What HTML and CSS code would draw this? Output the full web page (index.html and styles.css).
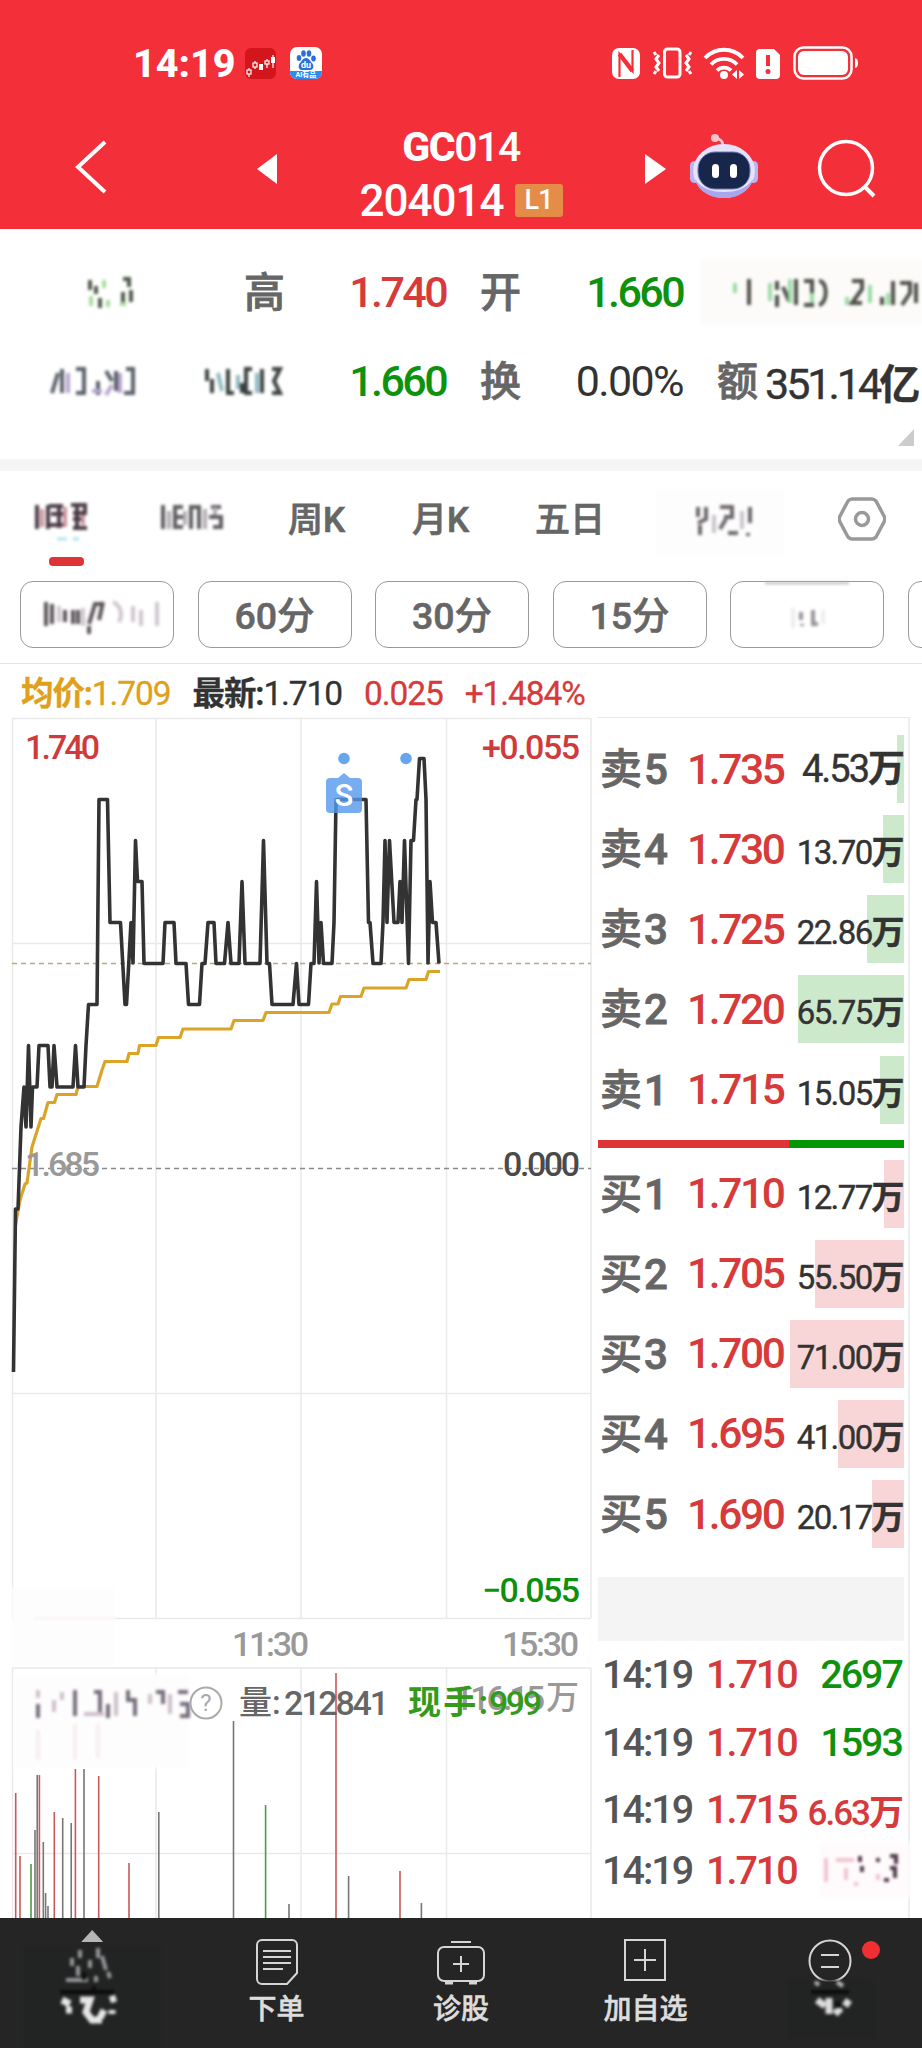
FILE: index.html
```html
<!DOCTYPE html>
<html lang="zh-CN">
<head>
  <meta charset="UTF-8" />
  <title>GC014 204014</title>
  <link rel="stylesheet" href="styles.css">
</head>
<body>
  <!-- Header -->
  <header>
    <div class="status-bar">
      <span class="clock">14:19</span>
      <svg class="app-icon" width="31" height="31" viewBox="0 0 31 31">
        <rect width="31" height="31" rx="6" fill="#d3161c"/>
        <g stroke="#fff" stroke-width="1.2" fill="none"><path d="M4 20v9M10 13v8M22 11v9M28 7v13"/><rect x="2" y="22" width="4" height="4" fill="#d3161c"/><rect x="8" y="15" width="4" height="4" fill="#d3161c"/><rect x="20" y="13" width="4" height="3" fill="#d3161c"/></g>
        <path d="M14 16h4v6h-4zM26 9h4v6h-4z" fill="#fff"/>
      </svg>
      <svg class="app-icon" width="32" height="32" viewBox="0 0 32 32">
        <rect width="32" height="32" rx="7" fill="#fff"/>
        <path d="M0 24h32v1a7 7 0 0 1-7 7H7a7 7 0 0 1-7-7z" fill="#2c8df0"/>
        <g fill="#2a6fd8"><ellipse cx="9" cy="11" rx="2.3" ry="3"/><ellipse cx="13.500" cy="6.500" rx="2.300" ry="3.200"/><ellipse cx="19" cy="6.500" rx="2.300" ry="3.200"/><ellipse cx="23.500" cy="11.500" rx="2.300" ry="3"/><path d="M16 11c3 0 4 3 6 5s2 7-2 7h-8c-4 0-4-5-2-7s3-5 6-5z"/></g>
        <text x="16" y="21" class="du">du</text>
        <text x="16" y="30" class="ai">AI有品</text>
      </svg>
      <svg class="sys-icons" width="250" height="36" viewBox="612 44 250 36">
        <rect x="612" y="47" width="28" height="31" rx="7" fill="#fff"/>
        <path d="M619.500 76V53l13 17V49" fill="none" stroke="#f32f39" stroke-width="2.200"/>
        <path d="M619.500 53l13 17" stroke="#f32f39" stroke-width="4.500"/>
        <g fill="none" stroke="#fff" stroke-width="3"><rect x="664.500" y="48" width="15.500" height="28" rx="3"/><path d="M659 54l-3 4 3 4-3 4 3 4M686 54l3 4-3 4 3 4-3 4M691 51l-2 3M654 51l2 3M691 73l-2-3M654 73l2-3"/></g>
        <g fill="none" stroke="#fff" stroke-width="3.800"><path d="M705 57a26 26 0 0 1 38 0M711 63.500a18 18 0 0 1 26 0M717 69.500a10 10 0 0 1 14 0"/></g>
        <circle cx="724" cy="74" r="4" fill="#fff"/>
        <path d="M737 69v9l-5-4.500zM739 69v9l5-4.500z" fill="#fff"/>
        <path d="M760 48h14l6 6v20a4 4 0 0 1-4 4h-16a4 4 0 0 1-4-4V52a4 4 0 0 1 4-4z" fill="#fff"/>
        <path d="M768 54v11" stroke="#f32f39" stroke-width="4"/><circle cx="768" cy="70.500" r="2.500" fill="#f32f39"/>
        <rect x="794.500" y="46.500" width="57" height="31" rx="9" fill="none" stroke="#fff" stroke-width="2.500"/>
        <rect x="798" y="50" width="50" height="24" rx="6" fill="#fff"/>
        <path d="M855 57c4 0 4 10 0 10z" fill="#fff"/>
      </svg>
    </div>
    <div class="title-bar">
      <svg class="back" width="34" height="56" viewBox="0 0 34 56"><path d="M31 3L4 28l27 25" fill="none" stroke="#fff" stroke-width="4"/></svg>
      <svg class="prev" width="20" height="30" viewBox="0 0 20 30"><path d="M20 0v30L0 15z" fill="#fff"/></svg>
      <div class="title">
        <div class="name"><b>GC</b>014</div>
        <div class="code">204014<span class="level">L1</span></div>
      </div>
      <svg class="next" width="21" height="30" viewBox="0 0 21 30"><path d="M0 0v30l21-15z" fill="#fff"/></svg>
      <svg class="robot" width="70" height="66" viewBox="0 0 70 66">
        <path d="M34 12c0-5-2-7-8-8" fill="none" stroke="#f3c9dd" stroke-width="3"/><circle cx="26" cy="4" r="4" fill="#f8c3cd"/>
        <rect x="1" y="27" width="9" height="22" rx="4.500" fill="#b9b4f2"/><rect x="60" y="27" width="9" height="22" rx="4.500" fill="#b9b4f2"/>
        <ellipse cx="35" cy="37" rx="31" ry="27" fill="#e6e2fb"/>
        <path d="M6 45c4 14 17 19 29 19s25-5 29-19c-6 10-18 13-29 13S12 55 6 45z" fill="#aaa6ec"/>
        <rect x="9" y="18" width="52" height="37" rx="17" fill="#17264b" stroke="#6d79b4"/>
        <rect x="23" y="30" width="7" height="14" rx="3.500" fill="#fff"/><rect x="41" y="30" width="7" height="14" rx="3.500" fill="#fff"/>
      </svg>
      <svg class="search" width="60" height="60" viewBox="0 0 60 60"><circle cx="29" cy="29" r="26.500" fill="none" stroke="#fff" stroke-width="3.500"/><path d="M47 47l10 10" stroke="#fff" stroke-width="4"/></svg>
    </div>
  </header>

  <!-- Quote summary -->
  <section class="quote">
    <div class="quote-row">
      <svg class="smudge s1" width="235" height="60" viewBox="0 0 235 60"><path d="M90 18v10M96 24v8M100 36v10M123 17h6v8M123 30v14M131 28v12" stroke="#4b5a48"/><path d="M91 34v10M108 38v7M120 42h6M104 18v8" stroke="#a9dd9c"/></svg>
      <label class="c-high">高</label><span class="c-hv red">1.740</span>
      <label class="c-open">开</label><span class="c-ov green">1.660</span>
      <svg class="smudge s2" width="222" height="66" viewBox="0 0 222 66"><rect width="222" height="66" fill="#fdfbf9" stroke="none"/><path d="M49 20v26M77 22v9M77 36v12M83 28l6 14M96 20v26M104 22h8v24h-8M119 22c9 0 9 22 0 24M152 22h10v8l-10 14h10M182 38v8M193 22v24M200 24h10v10l-8 12M216 24v20" stroke="#4c504a"/><path d="M35 24v10M70 24v18M90 20v24M112 34v10M147 38v8M170 26v18M188 34v12" stroke="#9adba6"/></svg>
    </div>
    <div class="quote-row">
      <svg class="smudge s3" width="150" height="60" viewBox="0 0 150 60"><path d="M52 42l6-20M62 18v24M76 18h8v24h-8M98 30v14M106 20l6 10M126 18h7v24h-9M116 20v20" stroke="#59606a"/><path d="M68 22v20M92 40h10M112 34l-6 10M120 22v20" stroke="#b9a4d0"/></svg>
      <svg class="smudge s4" width="94" height="60" viewBox="0 0 94 60"><path d="M7 18v12M12 28v14M28 18v24h6M42 32v10M52 18h-6v24h6M62 18v24M72 18h8l-6 12 6 12h-8" stroke="#39413f"/><path d="M18 22l4 18M38 24v14M57 22v20" stroke="#8eb8c0"/></svg>
      <span class="c-lv green">1.660</span>
      <label class="c-open">换</label><span class="c-ov pct">0.00%</span>
      <label class="c-amt">额</label><span class="c-av">351.14<b>亿</b></span>
    </div>
    <i class="corner"></i>
  </section>

  <!-- Period tabs -->
  <nav class="tabs">
    <div class="tab tab-min"><svg class="smudge" width="100" height="62" viewBox="0 0 100 62"><path d="M22 16v24M33 16v24M34 17h14M36 25h12M34 36h16M44 17v22M56 16h14v8h-12M58 30h12M58 39h14M62 18v20" stroke="#4b3c46"/><path d="M27 20v18M50 18v20M68 26v10" stroke="#cf93a0"/><path d="M42 50h10M58 50h6" stroke="#bfeaf4"/></svg></div>
    <div class="tab tab-day"><svg class="smudge" width="84" height="62" viewBox="0 0 84 62"><path d="M8 16v24M20 16v24M20 18h8M20 28h8M20 38h8M36 16v24M44 16v24M34 18h10M56 18h10M54 28h12v10h-8" stroke="#5f5b60"/><path d="M14 22v18M50 20v20M30 22v14M60 18v8" stroke="#b3abb3"/></svg></div>
    <div class="tab tab-week">周K</div>
    <div class="tab tab-month">月K</div>
    <div class="tab tab-five">五日</div>
    <div class="tab tab-more"><svg class="smudge" width="128" height="68" viewBox="0 0 128 68"><rect width="128" height="68" fill="#fefdfd" stroke="none"/><path d="M42 18v10M50 18v12l-8 4M44 36v10M64 18h12v10h-8M70 30l-6 10M72 44h10M94 18v16M92 44v3" stroke="#6a656a"/><path d="M58 26v18M86 22v18" stroke="#c9c3cb"/></svg></div>
    <svg class="setting" width="48" height="46" viewBox="0 0 48 46"><path d="M14 3h20c2 0 3 1 4 2l8 15c1 2 1 4 0 6l-8 15c-1 1-2 2-4 2H14c-2 0-3-1-4-2L2 26c-1-2-1-4 0-6l8-15c1-1 2-2 4-2z" fill="none" stroke="#999" stroke-width="3.500"/><circle cx="24" cy="23" r="6.500" fill="none" stroke="#999" stroke-width="3.500"/></svg>
  </nav>
  <div class="chips">
    <div class="chip"><svg class="smudge" width="150" height="64" viewBox="0 0 150 64"><path d="M25 20v24M31 22v20M44 28v12M52 28v14M57 28v14M68 42l6-20h6M68 44v8M82 20l-4 18" stroke="#5b545a"/><path d="M38 24v16M62 26v18M92 20c8 4 10 12 6 20M112 24v16M120 28v16M136 20v24" stroke="#cfc6ce"/></svg></div>
    <div class="chip">60分</div>
    <div class="chip">30分</div>
    <div class="chip">15分</div>
    <div class="chip"><svg class="smudge" width="150" height="64" viewBox="0 0 150 64"><path d="M34 0h84" stroke="#b5b0b3"/><path d="M70 30v8M71 42v2M82 28v14h5" stroke="#97929b"/><path d="M62 26v20M92 28v14" stroke="#efecef"/></svg></div>
    <div class="chip"></div>
  </div>

  <div class="legend">
    <span class="avg"><b>均价:</b>1.709</span>
    <span class="last"><b>最新:</b>1.710</span>
    <span class="red">0.025</span>
    <span class="red">+1.484%</span>
  </div>

  <main>
    <!-- Intraday chart and volume, drawn in page coordinates -->
    <svg class="chart" width="597" height="1201" viewBox="0 717 597 1201">
      <g class="grid">
        <path d="M12 718.500H591M12 943.500H591M12 1393.500H591M12 1618.500H591M12 1668H591M12 1853.500H591"/>
        <path d="M12.500 718V1618M156 718V1618M301 718V1618M446.500 718V1618M591 718V1618"/>
        <path d="M12.500 1668V1918M156 1668V1918M301 1668V1918M446.500 1668V1918M591 1668V1918"/>
      </g>
      <path class="dash-last" d="M12 963.500H591"/>
      <path class="dash-zero" d="M12 1168.500H591"/>

      <polyline class="line-avg" points="15.5,1225 20,1200 25,1184 27,1183 32,1147 41,1118.500 43.500,1118.500 48,1102.500 54.500,1102.500 57,1094.500 76,1094.500 78,1086.500 97,1086.500 102,1070 105,1061.500 127,1061.500 129,1053.500 138,1053.500 139.500,1045.500 156,1045.500 158.500,1037.500 180,1037.500 183,1029 231,1029 234,1020.500 263,1020.500 266,1012.500 329,1012.500 332,1004 338,1004 340.500,996.500 361,996.500 364,988 406,988 409,979.500 426,979.500 428.500,971.500 440,971.500"/>
      <polyline class="line-price" points="13.5,1372 15.500,1209 18,1209 21,1127 24,1087 26,1127 28.500,1045.500 31,1127 32.500,1087 37,1087 39,1045.500 48,1045.500 50,1087 52,1087 54,1045.500 57,1087 73,1087 75.500,1045.500 78,1087 84,1087 86,1045.500 88.500,1004.500 97,1004.500 99,799.500 107.500,799.500 110,922.500 120.500,922.500 125,1004.500 126.500,1004.500 131,922.500 133,963 135.500,840.500 137.500,881.500 142,881.500 144,963.500 163,963.500 165,922.500 174,922.500 176,963.500 186,963.500 188.500,1004.500 199.500,1004.500 202,963.500 205,963.500 208,922.500 214,922.500 216,963.500 224.500,963.500 228,922.500 231,963.500 239,963.500 242,881.500 245,963.500 260,963.500 263.500,840.500 267,963.500 269.500,963.500 272,1004.500 293,1004.500 296.500,963.500 299,1004.500 308.500,1004.500 311,963.500 314,963.500 316.500,881.500 319,963 321,922.500 323.500,963.500 332,963.500 334,922.500 336,799.500 366,799.500 368.500,922.500 370,922.500 373,963.500 381,963.500 383,922.500 385,840.500 387,922.500 389.500,840.500 394,922.500 398,922.500 400,881.500 402,922.500 404.500,840.500 408.500,963.500 411,840.500 413.500,840.500 416,799.500 417,799.500 419.500,758.500 424,758.500 426,799 428,963 430,881.500 432.500,922.500 436,922.500 439,963.500"/>

      <g class="marker">
        <circle cx="344" cy="758.500" r="5.800"/><circle cx="406" cy="758.500" r="5.800"/>
        <path class="flag" d="M330 778h8l6-5 6 5h8a4 4 0 0 1 4 4v27a4 4 0 0 1-4 4h-28a4 4 0 0 1-4-4v-27a4 4 0 0 1 4-4z"/>
        <text x="344" y="806">S</text>
      </g>

      <g class="axis">
        <text class="f-red" x="25" y="759" textLength="75">1.740</text>
        <text class="f-red" x="482" y="759" textLength="98">+0.055</text>
        <text class="f-grey" x="25" y="1176" textLength="75">1.685</text>
        <text class="f-dark" x="503" y="1176" textLength="77">0.000</text>
        <text class="f-green" x="482" y="1602" textLength="98">−0.055</text>
        <text class="f-grey" x="232" y="1656" textLength="77">11:30</text>
        <text class="f-grey" x="502" y="1656" textLength="77">15:30</text>
        <text class="f-grey" x="454" y="1710" textLength="91">116.15</text>
        <text class="f-grey cjk" x="546" y="1709">万</text>
      </g>

      <g class="smudge">
        <rect x="12" y="1586" width="103" height="80" fill="#fefdfd" stroke="none"/>
        <rect x="14" y="1674" width="175" height="94" fill="#fefdfd" stroke="none"/>
        <path d="M34 1618.500H115" stroke="#f5efef" stroke-width="2"/>
        <path d="M38 1704v14M75 1690v26M94 1692h6v24M108 1704v14M128 1690v10h7v16M156 1692h7v12M178 1692h10M180 1704h8v12h-8" stroke="#746b7b"/>
        <path d="M38 1690v8M54 1700v12M62 1692v8M84 1714h20M116 1692v24M150 1694v10M170 1694v20" stroke="#cdbfca"/>
        <path d="M38 1730v30M75 1724v36M98 1724v34" stroke="#f6edf1"/>
      </g>

      <g class="vol up"><path d="M15.700 1793V1918M20 1856V1918M39.400 1775V1918M54.300 1812V1918M75.400 1769V1918M98.700 1776V1918M129 1863V1918M336 1673V1918M400 1871V1918"/></g>
      <g class="vol down"><path d="M31 1864V1918M265.600 1805V1918"/></g>
      <g class="vol flat"><path d="M35 1830V1918M37.200 1775V1918M43.300 1842V1918M45.600 1893V1918M48 1906V1918M62.700 1818V1918M71.200 1823V1918M84 1769V1918M158.800 1812V1918M233.500 1721V1918M289 1904V1918M348.600 1876V1918M421.400 1903V1918"/></g>

      <circle cx="206" cy="1703" r="15.500" fill="#fff" stroke="#aaa" stroke-width="2"/>
      <text class="help" x="206" y="1711">?</text>
      <g class="axis">
        <text class="f-mid cjk" x="239" y="1714">量:</text>
        <text class="f-mid" x="284" y="1714.500" textLength="105">212841</text>
        <text class="f-leaf cjk" x="408" y="1714" textLength="80">现手:</text>
        <text class="f-leaf" x="489" y="1714.500" textLength="53">999</text>
      </g>
    </svg>

    <!-- Order book -->
    <aside class="book">
      <div class="order sell"><label>卖<em>5</em></label><span class="price">1.735</span><span class="amount big" style="--w:7px">4.53<b>万</b></span></div>
      <div class="order sell"><label>卖<em>4</em></label><span class="price">1.730</span><span class="amount" style="--w:21px">13.70<b>万</b></span></div>
      <div class="order sell"><label>卖<em>3</em></label><span class="price">1.725</span><span class="amount" style="--w:37px">22.86<b>万</b></span></div>
      <div class="order sell"><label>卖<em>2</em></label><span class="price">1.720</span><span class="amount" style="--w:106px">65.75<b>万</b></span></div>
      <div class="order sell"><label>卖<em>1</em></label><span class="price">1.715</span><span class="amount" style="--w:24px">15.05<b>万</b></span></div>
      <div class="ratio"></div>
      <div class="order buy"><label>买<em>1</em></label><span class="price">1.710</span><span class="amount" style="--w:20px">12.77<b>万</b></span></div>
      <div class="order buy"><label>买<em>2</em></label><span class="price">1.705</span><span class="amount" style="--w:89px">55.50<b>万</b></span></div>
      <div class="order buy"><label>买<em>3</em></label><span class="price">1.700</span><span class="amount" style="--w:114px">71.00<b>万</b></span></div>
      <div class="order buy"><label>买<em>4</em></label><span class="price">1.695</span><span class="amount" style="--w:66px">41.00<b>万</b></span></div>
      <div class="order buy"><label>买<em>5</em></label><span class="price">1.690</span><span class="amount" style="--w:32px">20.17<b>万</b></span></div>
      <div class="detail-head"></div>
      <div class="deal"><span class="time">14:19</span><span class="red">1.710</span><span class="qty green">2697</span></div>
      <div class="deal"><span class="time">14:19</span><span class="red">1.710</span><span class="qty green">1593</span></div>
      <div class="deal"><span class="time">14:19</span><span class="red">1.715</span><span class="qty small red">6.63<b>万</b></span></div>
      <div class="deal last"><span class="time">14:19</span><span class="red">1.710</span><svg class="smudge" width="90" height="56" viewBox="0 0 90 56"><rect width="90" height="56" fill="#fffbfc" stroke="none"/><path d="M40 14v6M42 24v6M56 18h4M70 14h6v8M70 26h5v10M64 38h5" stroke="#51394d"/><path d="M6 16v24M16 18h18M26 26v12M34 42h4M58 32v6" stroke="#f0c3cf"/></svg></div>
    </aside>
  </main>

  <footer>
    <div class="item">
      <i class="caret"></i>
      <svg class="smudge blob" width="136" height="102" viewBox="0 0 136 102"><rect width="136" height="102" fill="#222423" stroke="none"/><path d="M56 4v8M74 2v10M48 12v8M54 20v10M66 14v8M78 10l4 14M84 26l2 6M42 34h22M72 30v6" stroke="#98989c"/><path d="M38 54l8 4M42 64h6M56 54h10l-4 12 6 8h10M80 64l-4 8M86 54l6-2M88 64v4" stroke="#e6e6e6" stroke-width="7"/><path d="M60 26v8M70 40v8M36 46h54" stroke="#0b0b0b"/></svg>
    </div>
    <div class="item">
      <svg width="42" height="46" viewBox="0 0 42 46"><path d="M6 1h30a5 5 0 0 1 5 5v28L31 45H6a5 5 0 0 1-5-5V6a5 5 0 0 1 5-5z"/><path d="M7 12h28M7 18h28M7 24h28M7 30h20"/></svg>
      <span>下单</span>
    </div>
    <div class="item">
      <svg width="50" height="46" viewBox="0 0 50 46"><path d="M15 3h20M8 8h34a6 6 0 0 1 6 6v22a6 6 0 0 1-6 6H8a6 6 0 0 1-6-6V14a6 6 0 0 1 6-6zM25 17v16M17 25h16"/><path d="M9 44h8M33 44h8" stroke-width="3"/></svg>
      <span>诊股</span>
    </div>
    <div class="item">
      <svg width="42" height="42" viewBox="0 0 42 42"><path d="M1 1h40v40H1zM21 10v22M10 21h22"/></svg>
      <span>加自选</span>
    </div>
    <div class="item">
      <svg width="44" height="44" viewBox="0 0 44 44"><circle cx="22" cy="22" r="20.500"/><path d="M13 16h18M13 28h18"/></svg>
      <i class="dot"></i>
      <svg class="smudge blob-more" width="84" height="58" viewBox="0 0 84 58"><rect width="84" height="58" fill="#222423" stroke="none"/><path d="M26 2l4 3M48 2l6 4" stroke="#bbb"/><path d="M28 20l8 6M40 18v16M46 34l6-6M60 20l-4 6" stroke="#ddd" stroke-width="7"/><path d="M22 12h38M49 22v6" stroke="#0b0b0b"/></svg>
    </div>
  </footer>
</body>
</html>
```
FILE: styles.css
```css
* { box-sizing: border-box; }
body {
  margin: 0;
  width: 922px;
  height: 2048px;
  overflow: hidden;
  background: #fff;
  color: #333;
  font-family: Roboto, "Noto Sans CJK SC", sans-serif;
  font-weight: 500;
  white-space: nowrap;
}
svg { display: block; flex: none; }
i { display: block; }
em { font-style: normal; }
.red { color: #d63a3a; }
.green { color: #0e920e; }

/* obscured text */
.smudge {
  fill: none;
  stroke-width: 4;
  filter: blur(1.7px);
}

header {
  height: 229px;
  background: #f32f39;
  color: #fff;
}
.status-bar {
  display: flex;
  align-items: center;
  height: 126px;
  padding: 0 60px 0 133px;
}
.clock {
  width: 112px;
  font-size: 39.5px;
  font-weight: 800;
}
.app-icon { margin-right: 14px; }
.app-icon text {
  fill: #fff;
  font-weight: 700;
  text-anchor: middle;
}
.app-icon .du { font-size: 9px; }
.app-icon .ai { font-size: 7px; }
.sys-icons { margin-left: auto; }

.title-bar {
  display: flex;
  align-items: flex-start;
  height: 103px;
}
.back { margin: 13px 0 0 74px; }
.prev { margin: 28px 0 0 149px; }
.title { width: 368px; }
.name {
  height: 51px;
  line-height: 42px;
  font-size: 41px;
  text-align: center;
  letter-spacing: -1.4px;
}
.name b { font-weight: 800; }
.code {
  display: flex;
  align-items: center;
  justify-content: center;
  height: 44px;
  padding-top: 3px;
  font-size: 44px;
  letter-spacing: -1px;
}
.level {
  width: 48px;
  height: 33px;
  margin-left: 11px;
  border-radius: 3px;
  background: #e58d48;
  font-size: 27px;
  line-height: 33px;
  text-align: center;
}
.next { margin-top: 28px; }
.robot { margin: 8px 0 0 23px; }
.search { margin: 13px 0 0 58px; }

.quote {
  position: relative;
  height: 242px;
  padding-top: 18px;
  border-bottom: 12px solid #f5f5f5;
}
.quote-row {
  display: flex;
  align-items: center;
  height: 89px;
  font-size: 43px;
  letter-spacing: -2.6px;
}
.quote label {
  width: 40px;
  padding-bottom: 5px;
  color: #666;
  font-size: 41px;
  -webkit-text-stroke: 0.8px;
}
.c-high { margin-left: 9px; }
.c-hv, .c-ov, .c-lv {
  width: 162px;
  text-align: right;
}
.c-open { margin-left: 34px; }
.c-ov { width: 163px; }
.pct {
  font-weight: 400;
  letter-spacing: -1.6px;
}
.s2 { margin-left: 17px; }
.s3 { margin-right: 50px; }
.s4 { margin-right: -10px; }
.c-amt { margin-left: 34px; }
.c-av {
  margin-left: 8px;
  letter-spacing: -3px;
  font-weight: 400;
  -webkit-text-stroke: 0.4px;
}
.c-av b {
  font-size: 41px;
  font-weight: 700;
}
.corner {
  position: absolute;
  right: 8px;
  bottom: 13px;
  width: 16px;
  height: 17px;
  background: #ccc;
  clip-path: polygon(100% 0, 100% 100%, 0 100%);
}

.tabs {
  display: flex;
  align-items: center;
  height: 98px;
  color: #666;
  font-size: 35px;
  -webkit-text-stroke: 0.7px;
}
.tab { height: 98px; line-height: 99px; }
.tab .smudge { margin-top: 18px; }
.tab-min {
  position: relative;
  width: 155px;
  padding-left: 15px;
}
.tab-min::after {
  content: "";
  position: absolute;
  left: 49px;
  top: 86px;
  width: 35px;
  height: 9px;
  border-radius: 4px;
  background: #de3437;
}
.tab-day { width: 133px; }
.tab-week { width: 124px; }
.tab-month { width: 123px; }
.tab-five { width: 121px; }
.tab-more { width: 182px; }
.setting { margin-bottom: 2px; }

.chips {
  display: flex;
  gap: 23.5px;
  height: 95px;
  padding: 12px 0 0 20px;
  border-bottom: 1px solid #e4e4e4;
  overflow: hidden;
}
.chip {
  flex: none;
  width: 154px;
  height: 67px;
  border: 1px solid #999;
  border-radius: 13px;
  color: #666;
  font-size: 37.5px;
  line-height: 68px;
  text-align: center;
  -webkit-text-stroke: 0.6px;
}

.legend {
  display: flex;
  height: 53px;
  padding-left: 21px;
  gap: 22px;
  font-size: 33.5px;
  font-weight: 400;
  line-height: 60px;
  letter-spacing: -1.1px;
  -webkit-text-stroke: 0.3px;
}
.legend b {
  font-size: 32.5px;
  font-weight: 700;
}
.avg { color: #dfa01b; }

main {
  display: flex;
  height: 1201px;
}
.grid { stroke: #e9e9e9; stroke-width: 1.5; fill: none; }
.dash-last { stroke: #b9ab73; stroke-width: 1.5; stroke-dasharray: 5 4; }
.dash-zero { stroke: #8a8a8a; stroke-width: 1.5; stroke-dasharray: 5 4; }
.line-price, .line-avg {
  fill: none;
  stroke: #333;
  stroke-width: 3.6;
  stroke-linejoin: round;
}
.line-avg { stroke: #dba428; stroke-width: 3.2; }
.marker { fill: #67a5ec; }
.flag { fill: rgba(84, 153, 238, 0.8); }
.marker text {
  fill: #fff;
  font-size: 31px;
  text-anchor: middle;
}
.axis { font-size: 34px; font-weight: 500; }
.axis .cjk { font-size: 33px; }
.f-red { fill: #d03a3a; }
.f-green { fill: #0e8f0e; }
.f-grey { fill: #999; }
.f-dark { fill: #4a4a4a; }
.f-mid { fill: #666; }
.f-mid.cjk, .f-grey.cjk { -webkit-text-stroke: 0.7px; }
.f-leaf { fill: #349a1c; }
.axis .f-leaf.cjk { font-weight: 700; }
.help {
  fill: #aaa;
  font-size: 24px;
  font-weight: 400;
  text-anchor: middle;
}
.vol { stroke-width: 1.6; }
.up { stroke: #c75a5a; }
.down { stroke: #4c9b45; }
.flat { stroke: #777; }

.book {
  width: 313px;
  padding: 17px 4px 0 1px;
  border-top: 1px solid #e9e9e9;
  border-right: 2px solid #eee;
}
.order {
  display: flex;
  align-items: center;
  height: 68px;
  margin-bottom: 12.15px;
  font-size: 42.5px;
}
.order label {
  width: 89px;
  padding: 0 0 7px 2px;
  color: #666;
  font-size: 42px;
  -webkit-text-stroke: 0.9px;
}
.order em { margin-left: 2px; }
.price {
  color: #d63a3a;
  letter-spacing: -2.4px;
}
.amount {
  flex: 1;
  height: 68px;
  padding-right: 1px;
  line-height: 75px;
  font-size: 33px;
  font-weight: 400;
  letter-spacing: -1.6px;
  text-align: right;
  -webkit-text-stroke: 0.4px;
  background: linear-gradient(#cde9cc, #cde9cc) no-repeat right / var(--w) 100%;
}
.buy .amount { background-image: linear-gradient(#f8d6d7, #f8d6d7); }
.amount b { font-size: 33px; font-weight: 700; }
.amount.big {
  font-size: 38px;
  letter-spacing: -2px;
  line-height: 69px;
}
.amount.big b { font-size: 37px; }
.ratio {
  height: 8px;
  margin: 16px 0 12px;
  background: linear-gradient(90deg, #df3436 62.3%, #049604 62.3%);
}
.detail-head {
  height: 64px;
  margin: 29px 0 0;
  background: #f5f4f4;
}
.deal {
  display: flex;
  align-items: center;
  height: 67.5px;
  padding-left: 4px;
  font-size: 39.5px;
  font-weight: 500;
  letter-spacing: -2px;
}
.deal.last { height: 53px; }
.deal .smudge { margin: 0 -6px 0 auto; }
.time {
  width: 104px;
  color: #555;
}
.qty { margin-left: auto; padding-right: 2px; }
.qty.small { font-size: 35px; }
.qty b { font-size: 35px; font-weight: 700; }

footer {
  display: grid;
  grid-template-columns: repeat(5, 1fr);
  height: 130px;
  background: #252525;
  color: #ddd;
}
.item {
  position: relative;
  display: flex;
  flex-direction: column;
  align-items: center;
  padding-top: 21px;
  font-size: 28px;
}
.item > svg:not(.smudge) {
  fill: none;
  stroke: #d5d5d5;
  stroke-width: 2;
}
.item span {
  position: absolute;
  top: 69px;
  -webkit-text-stroke: 0.5px;
}
.caret {
  position: absolute;
  z-index: 1;
  top: 12px;
  width: 22px;
  height: 12px;
  background: #b5b5b5;
  clip-path: polygon(50% 0, 100% 100%, 0 100%);
}
.blob { margin-top: 7px; }
.blob-more {
  position: absolute;
  top: 62px;
  left: 51px;
}
.dot {
  position: absolute;
  top: 23px;
  left: 124px;
  width: 18px;
  height: 18px;
  border-radius: 50%;
  background: #ef2f31;
}
```
